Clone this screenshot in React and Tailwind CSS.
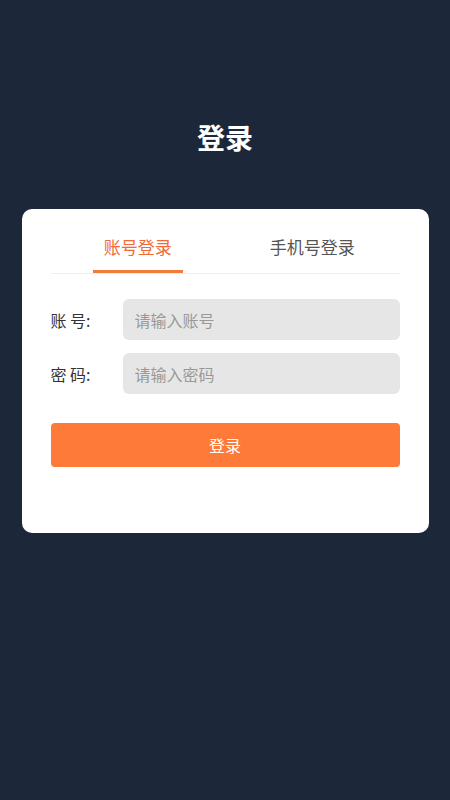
export default function App() {
  const font = { fontFamily: '"Noto Sans CJK SC", "Noto Sans", sans-serif' };
  return (
    <div className="w-[450px] h-[800px] bg-[#1c2839] flex flex-col items-center" style={font}>
      <h1 className="mt-[116px] text-[28px] leading-[42px] font-bold text-white">登录</h1>
      <div className="mt-[51px] w-[407px] h-[324px] bg-white rounded-[10px] px-[29px] pt-[24px]">
        <div className="flex border-b border-[#eeeeee]">
          <div className="flex-1 flex justify-center">
            <div className="w-[90px] h-[40px] text-center text-[17px] leading-[28px] text-[#f26b34] border-b-[3px] border-[#f47a3c] -mb-[2px]">账号登录</div>
          </div>
          <div className="flex-1 flex justify-center">
            <div className="h-[40px] text-center text-[17px] leading-[28px] text-[#555555]">手机号登录</div>
          </div>
        </div>
        <div className="mt-[25px] flex items-center">
          <label className="w-[72px] text-[16px] text-[#333333]">账 号:</label>
          <input className="flex-1 h-[41px] rounded-[6px] bg-[#e6e6e6] px-[12px] text-[16px] outline-none placeholder:text-[#999999]" placeholder="请输入账号" />
        </div>
        <div className="mt-[13px] flex items-center">
          <label className="w-[72px] text-[16px] text-[#333333]">密 码:</label>
          <input type="password" className="flex-1 h-[41px] rounded-[6px] bg-[#e6e6e6] px-[12px] text-[16px] outline-none placeholder:text-[#999999]" placeholder="请输入密码" />
        </div>
        <button className="mt-[29px] w-full h-[44px] rounded-[4px] bg-[#fe7a39] text-white text-[16px]">登录</button>
      </div>
    </div>
  );
}
